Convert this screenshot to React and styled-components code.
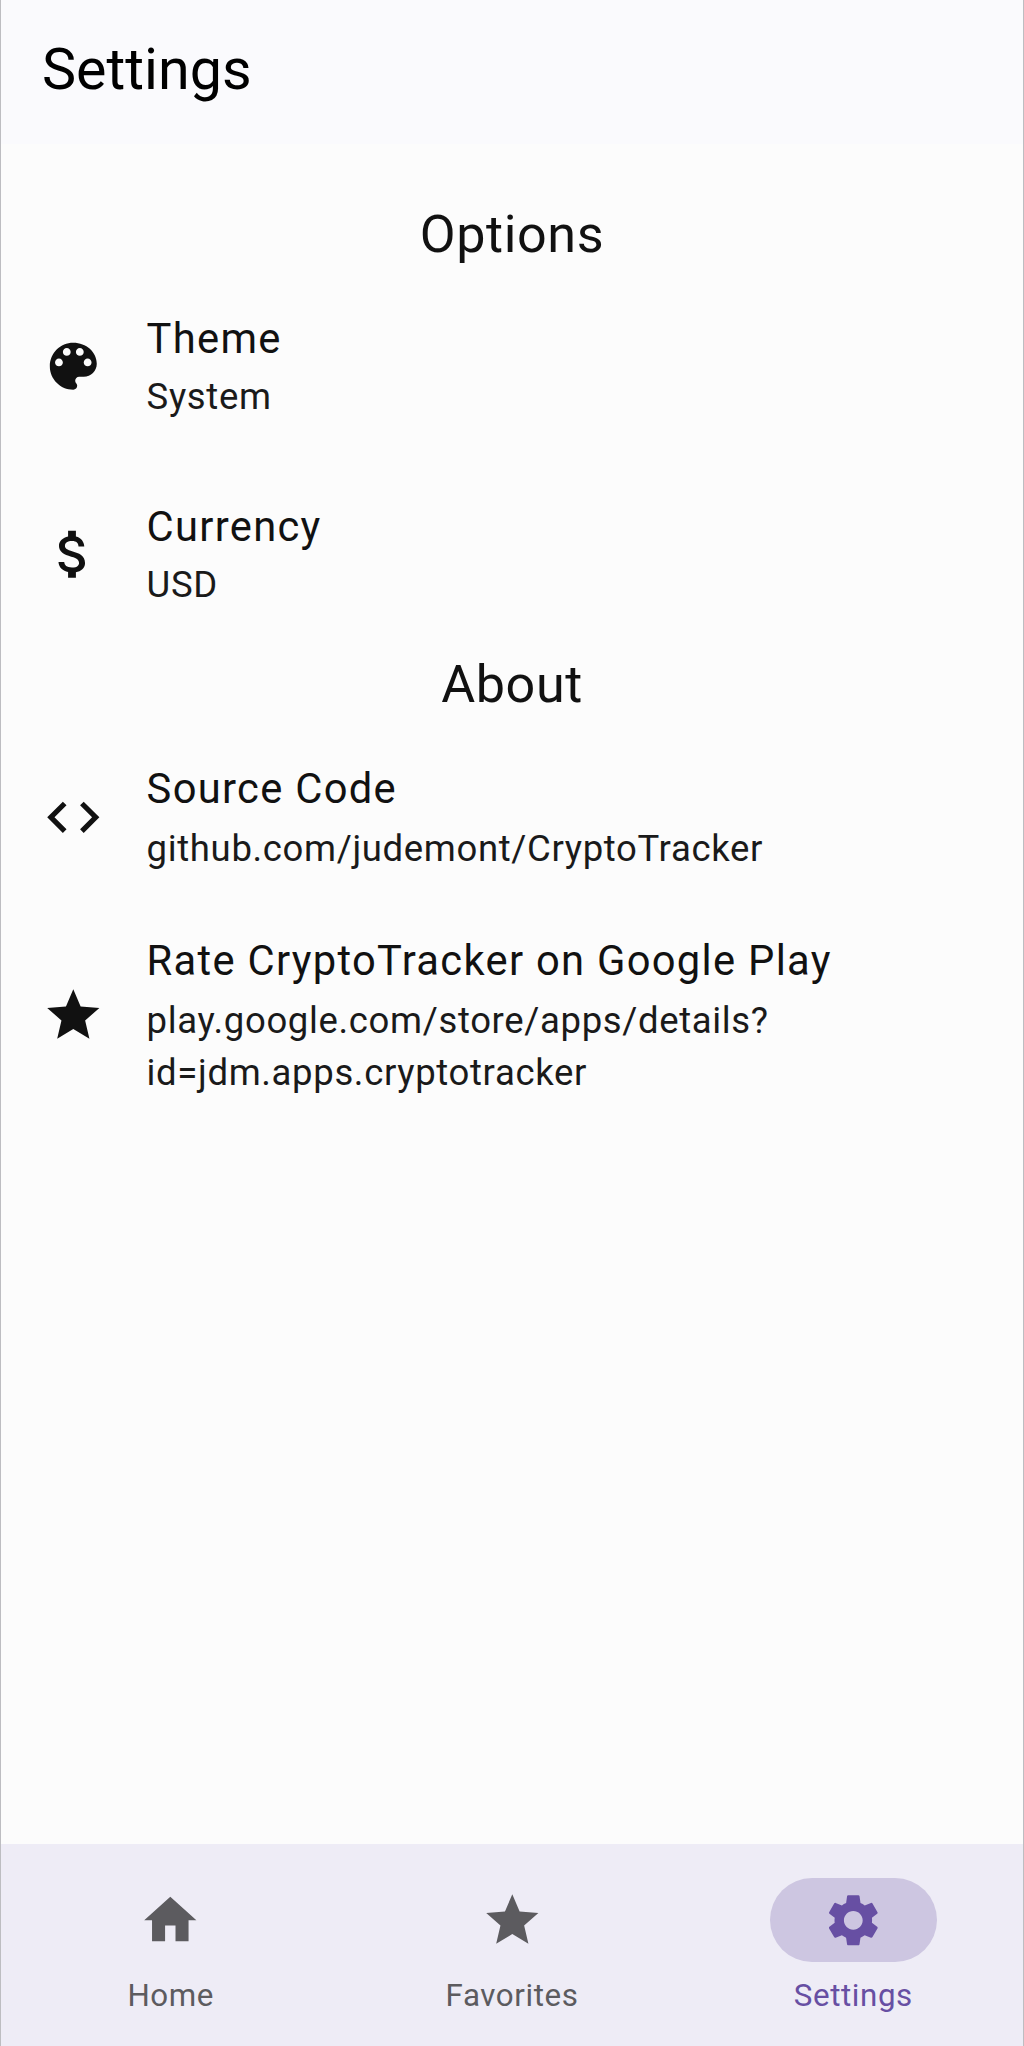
import React from "react";
import styled, { createGlobalStyle } from "styled-components";
import { MdAttachMoney, MdCode, MdStar, MdHome, MdSettings } from "react-icons/md";

const GlobalStyle = createGlobalStyle`
  *, *::before, *::after { box-sizing: border-box; }
  body { margin: 0; background: #fcfcfc; }
`;

const Screen = styled.div`
  display: flex;
  flex-direction: column;
  width: 100%;
  height: 2046px;
  background: #fcfcfc;
  border-left: 1px solid #bdbdc1;
  border-right: 1px solid #bdbdc1;
  font-family: Roboto, sans-serif;
  font-weight: 400;
  color: #111;
`;

const AppBar = styled.header`
  height: 144px;
  padding: 0 41px 4px;
  background: #fafafd;
`;

const AppTitle = styled.h1`
  margin: 0;
  font-size: 57.4px;
  font-weight: 400;
  line-height: 140px;
  color: #000;
`;

const Content = styled.main`
  flex: 1;
  padding-top: 61px;
`;

const SectionTitle = styled.h2`
  margin: 0;
  text-align: center;
  font-size: 52.1px;
  font-weight: 400;
  line-height: 60px;
  letter-spacing: 0.6px;
`;

const Section = styled.section`
  display: flex;
  flex-direction: column;
  gap: ${(p) => p.$gap}px;
  padding: 44px 0;
`;

const Tile = styled.div`
  display: flex;
  align-items: center;
  gap: 42px;
  padding: 0 41px;

  svg {
    flex: none;
    width: 62.6px;
    height: 62.6px;
  }
`;

const TileText = styled.div`
  display: flex;
  flex-direction: column;
  gap: ${(p) => p.$gap}px;
`;

const TileTitle = styled.div`
  font-size: 41.7px;
  line-height: 60px;
  letter-spacing: 1.3px;
`;

const TileSubtitle = styled.div`
  font-size: 36.5px;
  line-height: 52px;
  letter-spacing: 0.65px;
  white-space: pre-line;
  color: #1a1a1a;
`;

const NavBar = styled.nav`
  display: grid;
  grid-template-columns: repeat(3, 341.3px);
  justify-content: center;
  height: 202px;
  padding-top: 34px;
  background: #eeecf6;
`;

const NavItem = styled.div`
  display: flex;
  flex-direction: column;
  align-items: center;
  gap: 14px;
  color: ${(p) => (p.$active ? "#674fa3" : "#5c5b5f")};
`;

const Indicator = styled.div`
  display: flex;
  align-items: center;
  justify-content: center;
  width: 167px;
  height: 84px;
  border-radius: 42px;
  background: ${(p) => (p.$active ? "#cdc6e1" : "transparent")};

  svg {
    width: 62.6px;
    height: 62.6px;
  }
`;

const NavLabel = styled.span`
  font-size: 31.3px;
  line-height: 40px;
  letter-spacing: 0.6px;
`;

function PaletteIcon() {
  return (
    <svg viewBox="0 0 24 24" fill="currentColor">
      <path d="M12 3c-4.97 0-9 4.03-9 9s4.03 9 9 9c.83 0 1.5-.67 1.5-1.5 0-.39-.15-.74-.39-1.01-.23-.26-.38-.61-.38-.99 0-.83.67-1.5 1.5-1.5H16c2.76 0 5-2.24 5-5 0-4.42-4.03-8-9-8zm-5.5 9c-.83 0-1.5-.67-1.5-1.5S5.67 9 6.5 9 8 9.67 8 10.5 7.33 12 6.5 12zm3-4C8.67 8 8 7.33 8 6.5S8.67 5 9.5 5s1.5.67 1.5 1.5S10.33 8 9.5 8zm5 0c-.83 0-1.5-.67-1.5-1.5S13.67 5 14.5 5s1.5.67 1.5 1.5S15.33 8 14.5 8zm3 4c-.83 0-1.5-.67-1.5-1.5S16.67 9 17.5 9s1.5.67 1.5 1.5-.67 1.5-1.5 1.5z" />
    </svg>
  );
}

const options = [
  { icon: PaletteIcon, title: "Theme", subtitle: "System" },
  { icon: MdAttachMoney, title: "Currency", subtitle: "USD" },
];

const about = [
  { icon: MdCode, title: "Source Code", subtitle: "github.com/judemont/CryptoTracker" },
  {
    icon: MdStar,
    title: "Rate CryptoTracker on Google Play",
    subtitle: "play.google.com/store/apps/details?\nid=jdm.apps.cryptotracker",
  },
];

const tabs = [
  { icon: MdHome, label: "Home" },
  { icon: MdStar, label: "Favorites" },
  { icon: MdSettings, label: "Settings", active: true },
];

function TileList({ items, gap, lineGap }) {
  return (
    <Section $gap={gap}>
      {items.map(({ icon: Icon, title, subtitle }) => (
        <Tile key={title}>
          <Icon />
          <TileText $gap={lineGap}>
            <TileTitle>{title}</TileTitle>
            <TileSubtitle>{subtitle}</TileSubtitle>
          </TileText>
        </Tile>
      ))}
    </Section>
  );
}

export default function App() {
  return (
    <>
      <GlobalStyle />
      <Screen>
        <AppBar>
          <AppTitle>Settings</AppTitle>
        </AppBar>
        <Content>
          <SectionTitle>Options</SectionTitle>
          <TileList items={options} gap={74} lineGap={2} />
          <SectionTitle>About</SectionTitle>
          <TileList items={about} gap={56} lineGap={4} />
        </Content>
        <NavBar>
          {tabs.map(({ icon: Icon, label, active }) => (
            <NavItem key={label} $active={active}>
              <Indicator $active={active}>
                <Icon />
              </Indicator>
              <NavLabel>{label}</NavLabel>
            </NavItem>
          ))}
        </NavBar>
      </Screen>
    </>
  );
}
